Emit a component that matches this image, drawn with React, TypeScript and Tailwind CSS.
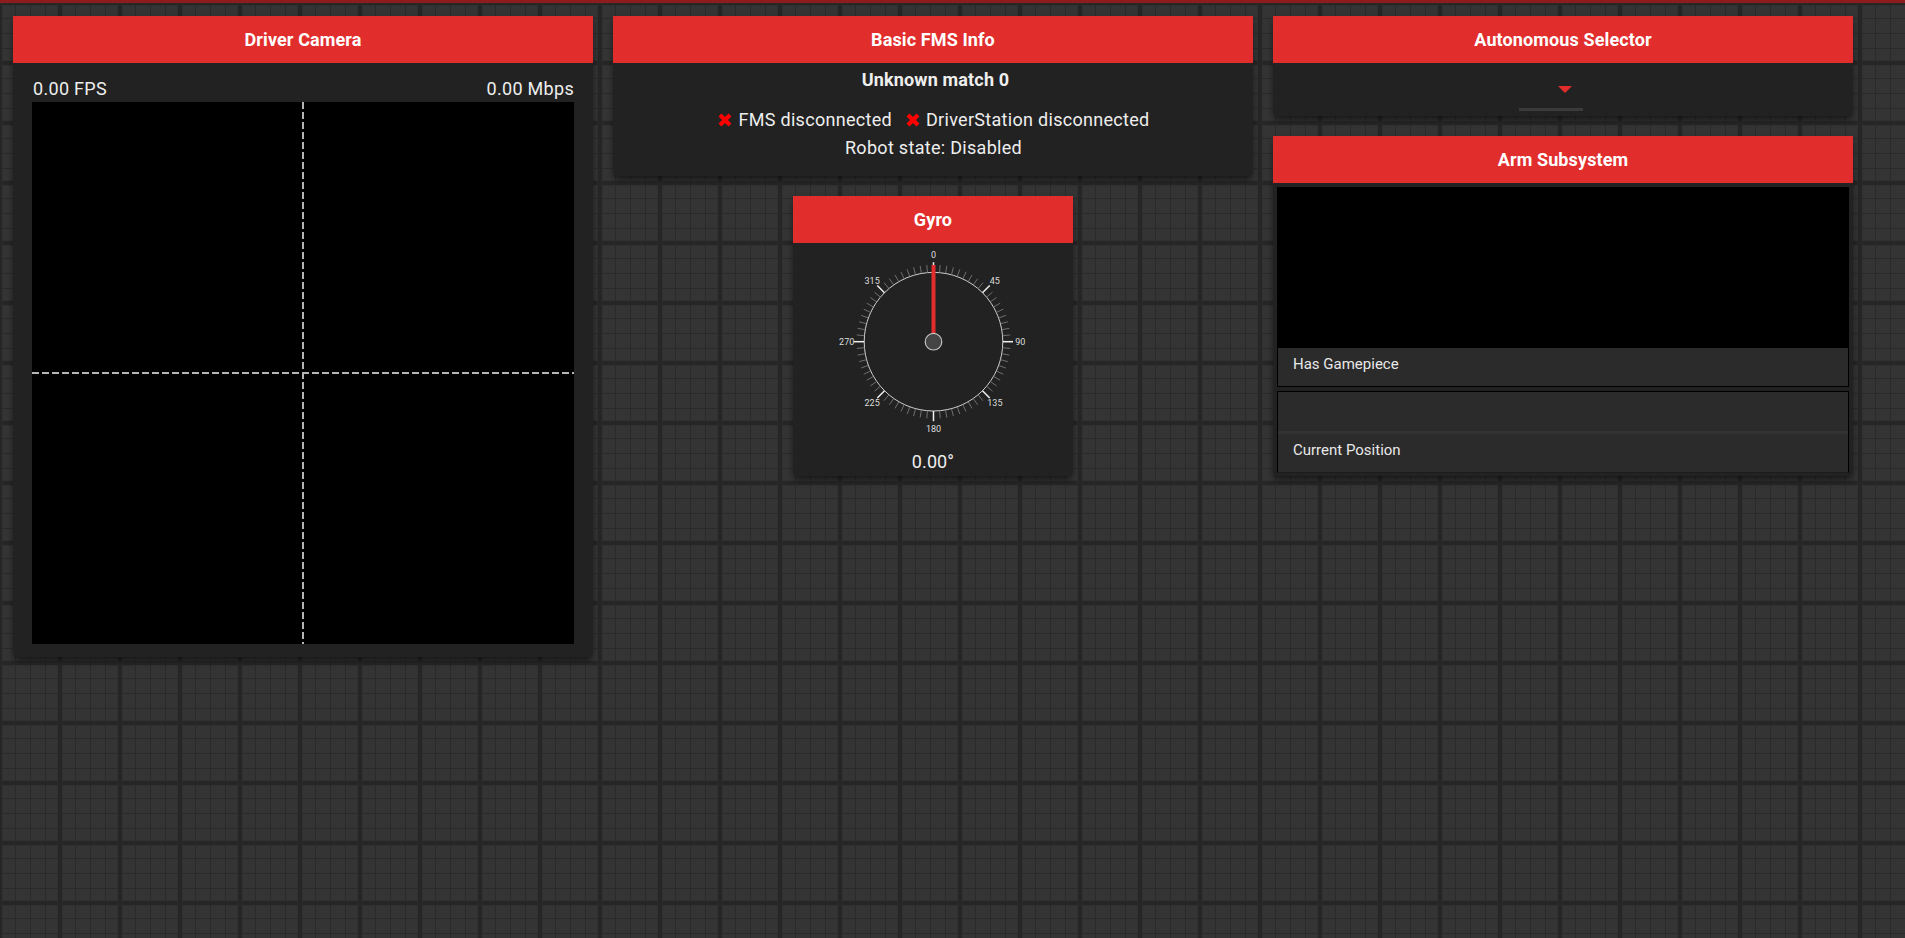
import React from 'react';

const Panel: React.FC<{ title: string; className?: string; children?: React.ReactNode }> = ({ title, className = '', children }) => (
  <div className={`flex flex-col rounded-b-[5px] bg-[#222222] shadow-[0_4px_7px_-1px_rgba(0,0,0,0.6)] ${className}`}>
    <div className="flex h-[47px] shrink-0 items-center justify-center bg-[#e22d2d] text-[18px] font-bold tracking-[0.12px] text-white">
      {title}
    </div>
    {children}
  </div>
);

const Gauge: React.FC = () => {
  const cx = 115.5;
  const cy = 98.7;
  const ticks = Array.from({ length: 72 }, (_, i) => i * 5);
  const labels = [0, 45, 90, 135, 180, 225, 270, 315];
  const pt = (deg: number, r: number) => {
    const a = (deg * Math.PI) / 180;
    return { x: cx + r * Math.sin(a), y: cy - r * Math.cos(a) };
  };

  return (
    <svg width="230" height="190" viewBox="0 0 230 190" className="block">
      <circle cx={cx} cy={cy} r="69.3" fill="none" stroke="#d0d0d0" strokeWidth="1" />
      {ticks.map((deg) => {
        const major = deg % 45 === 0;
        const a = pt(deg, 69.3);
        const b = pt(deg, major ? 79.5 : 77);
        return (
          <line
            key={deg}
            x1={a.x}
            y1={a.y}
            x2={b.x}
            y2={b.y}
            stroke={major ? '#f0f0f0' : '#777777'}
            strokeWidth={major ? 1.5 : 0.9}
          />
        );
      })}
      {labels.map((deg) => {
        const p = pt(deg, 86.8);
        return (
          <text key={deg} x={p.x} y={p.y + 3.2} textAnchor="middle" fontSize="9" fill="#dddddd" fontFamily="Roboto, sans-serif">
            {deg}
          </text>
        );
      })}
      <rect x={cx - 2} y={cy - 76.7} width="4" height="70" fill="#e22d2d" />
      <circle cx={cx} cy={cy} r="8.3" fill="#444444" stroke="#c4c4c4" strokeWidth="1.2" />
    </svg>
  );
};

const Cross: React.FC = () => (
  <svg width="14" height="14" viewBox="0 0 13 13" className="mr-[6px] shrink-0">
    <path d="M0.5 3.2 3.2 0.5 6.5 3.8 9.8 0.5 12.5 3.2 9.2 6.5 12.5 9.8 9.8 12.5 6.5 9.2 3.2 12.5 0.5 9.8 3.8 6.5Z" fill="#ff0000" />
  </svg>
);

export default function App() {
  return (
    <div className="flex h-screen flex-col overflow-hidden font-['Roboto',sans-serif] text-white">
      <div className="h-[3px] shrink-0 bg-[#8f1c1c]" />
      {/* the tile grid starts below the top bar, so its rows sit 3px lower */}
      <div className="flex flex-1 items-start bg-[#343434] bg-[linear-gradient(90deg,#262626_0,#262626_2px,#2d2d2d_2px,transparent_3px,transparent_57px,#2d2d2d_58px,#262626_58px),linear-gradient(180deg,#262626_0,#262626_2px,#2d2d2d_2px,transparent_3px,transparent_57px,#2d2d2d_58px,#262626_58px),linear-gradient(90deg,#2a2a2a_0,#2a2a2a_1px,transparent_1px),linear-gradient(180deg,#2a2a2a_0,#2a2a2a_1px,transparent_1px)] bg-[size:60px_60px,60px_60px,15px_15px,15px_15px] pl-[13px] pt-[13px]">
        <Panel title="Driver Camera" className="h-[641px] w-[580px]">
          <div className="flex h-[39px] items-end justify-between pl-[20px] pr-[19px] text-[18px] tracking-[0.3px] text-[#eeeeee]">
            <span>0.00 FPS</span>
            <span>0.00 Mbps</span>
          </div>
          <div className="relative mx-auto h-[542px] w-[542px] bg-black">
            <div className="absolute bottom-0 left-[270px] top-0 w-[2px] bg-[repeating-linear-gradient(180deg,#b4b4b4_0,#b4b4b4_7px,transparent_7px,transparent_10px)]" />
            <div className="absolute left-0 right-0 top-[270px] h-[2px] bg-[repeating-linear-gradient(90deg,#b4b4b4_0,#b4b4b4_7px,transparent_7px,transparent_10px)]" />
          </div>
        </Panel>

        <div className="ml-[20px] flex w-[640px] flex-col items-center gap-[20px]">
          <Panel title="Basic FMS Info" className="h-[160px] w-full">
            <div className="flex flex-col items-center text-[18px] leading-[20px] tracking-[0.3px] text-[#eeeeee]">
              <div className="ml-[5px] mt-[7px] h-[20px] font-bold tracking-[0.15px]">Unknown match 0</div>
              <div className="ml-[2px] mt-[20px] flex h-[20px] items-center">
                <Cross />
                <span>FMS disconnected</span>
                <span className="w-[14px]" />
                <Cross />
                <span>DriverStation disconnected</span>
              </div>
              <div className="ml-[1px] mt-[8px] h-[20px]">Robot state: Disabled</div>
            </div>
          </Panel>
          <Panel title="Gyro" className="h-[280px] w-[280px]">
            <div className="flex flex-col items-center">
              <Gauge />
              <div className="mt-[17px] text-[18px] leading-[24px] tracking-[0.1px] text-[#eeeeee]">0.00°</div>
            </div>
          </Panel>
        </div>

        <div className="ml-[20px] flex w-[580px] flex-col gap-[20px]">
          <Panel title="Autonomous Selector" className="h-[100px]">
            <div className="flex flex-col items-center">
              <div className="ml-[3px] mt-[23px] h-0 w-0 border-x-[7px] border-t-[7px] border-x-transparent border-t-[#e22d2d]" />
              <div className="mr-[24px] mt-[15px] h-[3px] w-[64px] bg-[#3a3a3a]" />
            </div>
          </Panel>
          <Panel title="Arm Subsystem" className="h-[340px]">
            <div className="flex flex-1 flex-col gap-[4px] px-[4px] pb-[3px] pt-[4px]">
              <div className="flex h-[200px] flex-col border border-black bg-[#2b2b2b]">
                <div className="h-[160px] bg-black" />
                <div className="px-[15px] pt-[6px] text-[15px] leading-[20px] text-[#e8e8e8]">Has Gamepiece</div>
              </div>
              <div className="flex flex-1 flex-col border border-black border-b-[#1c1c1c] bg-[#2b2b2b]">
                <div className="h-[42px] border-b-[3px] border-[#333333]" />
                <div className="px-[15px] pt-[6px] text-[15px] leading-[20px] text-[#e8e8e8]">Current Position</div>
              </div>
            </div>
          </Panel>
        </div>
      </div>
    </div>
  );
}
